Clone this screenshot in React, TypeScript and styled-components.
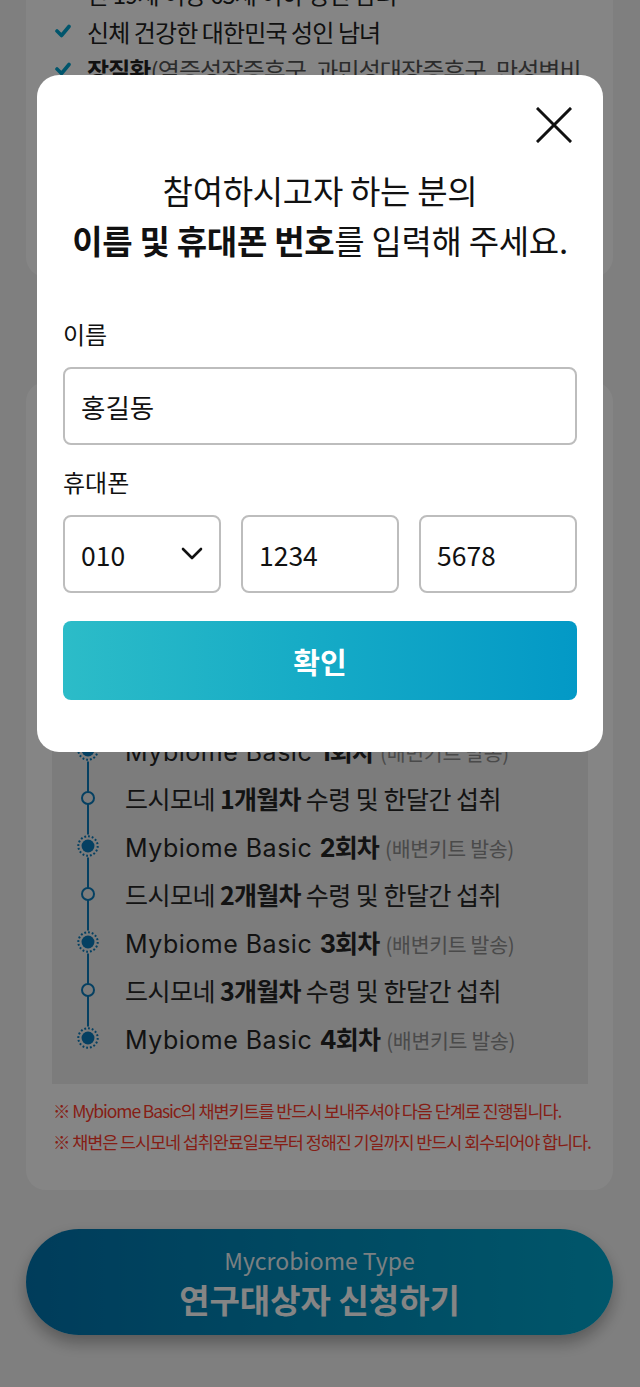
import React from 'react';
import styled, { createGlobalStyle } from 'styled-components';

const GlobalStyle = createGlobalStyle`
  html, body {
    margin: 0;
    padding: 0;
    background: #f4f4f4;
    font-family: "Noto Sans CJK KR", "Noto Sans", sans-serif;
    overflow: hidden;
  }
  * { box-sizing: border-box; }
`

const Page = styled.div`
  margin-top: -60px;
  padding: 0 27px 52px 26px;
  display: flex;
  flex-direction: column;
`

const Card = styled.section<{ $top?: number }>`
  background: #fff;
  border-radius: 20px;
  overflow: hidden;
  margin-top: ${p => p.$top ?? 0}px;
`

const CheckCard = styled(Card)`
  padding: 34px 25px 37px 29px;
`

const CheckRow = styled.div`
  display: flex;
  align-items: center;
  column-gap: 16px;
  height: 38px;
  font-size: 24px;
  color: #222;
  white-space: nowrap;
  letter-spacing: -0.9px;

  svg { flex-shrink: 0; }
  b { font-weight: 700; color: #222; }
  span { color: #555; }
`

const ScheduleCard = styled(Card)`
  padding: 24px 25px 33px 26px;
`

const ScheduleTitle = styled.h3`
  margin: 0 0 20px;
  height: 40px;
  line-height: 40px;
  font-size: 26px;
  font-weight: 700;
  color: #222;
`

const TimelineBox = styled.div`
  background: #ededed;
  padding: 20px 0 22px 24px;
`

const TimelineRow = styled.div`
  display: flex;
  align-items: center;
  column-gap: 25px;
  height: 48px;
  font-family: Inter, "Noto Sans CJK KR", sans-serif;
  font-size: 25px;
  color: #262626;
  white-space: nowrap;
  letter-spacing: 0.5px;

  b { font-weight: 700; letter-spacing: -0.8px; }
  small {
    font-family: "Noto Sans CJK KR", sans-serif;
    font-size: 20.5px;
    letter-spacing: -0.3px;
    color: #8e8e8e;
    margin-left: 6px;
  }
`

const NodeCell = styled.div<{ $first?: boolean; $last?: boolean }>`
  width: 24px;
  height: 48px;
  display: flex;
  align-items: center;
  justify-content: center;
  background: linear-gradient(#0a7cbc, #0a7cbc) no-repeat;
  background-size: 2px ${p => (p.$first || p.$last ? '50%' : '100%')};
  background-position: center ${p => (p.$first ? 'bottom' : 'top')};
`

const KoreanLine = styled.span`
  font-family: "Noto Sans CJK KR", sans-serif;
  font-size: 25px;
  letter-spacing: -0.5px;
`

const Notes = styled.div`
  margin-top: 11px;
  padding-left: 1px;
`

const Note = styled.p`
  margin: 0;
  line-height: 31px;
  font-size: 17.5px;
  letter-spacing: -1.1px;
  color: #ff3b2b;
  white-space: nowrap;
`

const ApplyButton = styled.button`
  margin-top: 39px;
  height: 106px;
  border: none;
  border-radius: 53px;
  background: linear-gradient(90deg, #0074ae 0%, #0093c0 60%, #00a6cd 100%);
  box-shadow: 0 8px 16px rgba(0, 0, 0, 0.3);
  display: flex;
  flex-direction: column;
  align-items: center;
  justify-content: center;
  row-gap: 3px;
  font-family: "Noto Sans CJK KR", sans-serif;
  color: #fff;
`

const ApplySub = styled.span`
  font-size: 23px;
  line-height: 30px;
  opacity: 0.92;
`

const ApplyMain = styled.span`
  font-size: 33px;
  line-height: 42px;
  font-weight: 700;
`

const Overlay = styled.div`
  position: fixed;
  inset: 0;
  background: rgba(0, 0, 0, 0.48);
  display: flex;
  justify-content: center;
  align-items: flex-start;
  padding-top: 75px;
`

const Modal = styled.div`
  width: 566px;
  background: #fff;
  border-radius: 22px;
  padding: 30px 26px 52px;
  display: flex;
  flex-direction: column;
`

const CloseButton = styled.button`
  align-self: flex-end;
  width: 40px;
  height: 40px;
  margin-right: 3px;
  padding: 0;
  border: none;
  background: none;
  display: flex;
  align-items: center;
  justify-content: center;
`

const Title = styled.h2`
  margin: 20px 0 0;
  text-align: center;
  font-size: 33px;
  line-height: 50px;
  font-weight: 400;
  color: #111;
  letter-spacing: -0.3px;
  white-space: nowrap;

  b { font-weight: 700; }
`

const Label = styled.label<{ $top: number }>`
  display: block;
  margin: ${p => p.$top}px 0 17px;
  font-size: 24px;
  line-height: 32px;
  color: #111;
`

const TextField = styled.div`
  height: 78px;
  border: 2px solid #bdbdbd;
  border-radius: 8px;
  display: flex;
  align-items: center;
  justify-content: space-between;
  padding: 0 16px;
  font-size: 26.5px;
  color: #111;
`

const PhoneRow = styled.div`
  display: grid;
  grid-template-columns: repeat(3, 1fr);
  column-gap: 20px;
`

const ConfirmButton = styled.button`
  margin-top: 28px;
  height: 79px;
  border: none;
  border-radius: 8px;
  background: linear-gradient(90deg, #2cbcc8 0%, #17acc6 45%, #0399c6 100%);
  color: #fff;
  font-family: "Noto Sans CJK KR", sans-serif;
  font-size: 29px;
  font-weight: 700;
`

const Check = () => (
  <svg width="16" height="14" viewBox="0 0 16 14">
    <polyline points="2,7 6.5,11.5 14,2.5" fill="none" stroke="#00a4cf" strokeWidth="3.6" strokeLinecap="round" strokeLinejoin="round" />
  </svg>
)

const KitNode = () => (
  <svg width="26" height="26" viewBox="0 0 26 26">
    <circle cx="13" cy="13" r="12.5" fill="#ededed" />
    <circle cx="13" cy="13" r="10.5" fill="none" stroke="#0a7cbc" strokeWidth="2.2" strokeDasharray="2 2.1" />
    <circle cx="13" cy="13" r="7" fill="#0a7cbc" />
  </svg>
)

const DoseNode = () => (
  <svg width="16" height="16" viewBox="0 0 16 16">
    <circle cx="8" cy="8" r="6" fill="#ededed" stroke="#0a7cbc" strokeWidth="2" />
  </svg>
)

type Step = { kind: 'kit' | 'dose'; n?: number; text?: string }

const steps: Step[] = [
  { kind: 'dose', text: '연구대상자 신청서 작성' },
  { kind: 'dose', text: '참여 동의서 작성 및 제출' },
  { kind: 'dose', text: '대상자 선정 결과 안내' },
  { kind: 'dose', text: '배변키트 및 제품 발송' },
  { kind: 'dose', text: '사전 설문 작성' },
  { kind: 'kit', n: 1 },
  { kind: 'dose', n: 1 },
  { kind: 'kit', n: 2 },
  { kind: 'dose', n: 2 },
  { kind: 'kit', n: 3 },
  { kind: 'dose', n: 3 },
  { kind: 'kit', n: 4 },
]

const checks = [
  '만 19세 이상 65세 이하 성인 남녀',
  '신체 건강한 대한민국 성인 남녀',
  null,
  '최근 3개월 이내 항생제 복용 이력이 없는 분',
  '연구 기간 동안 섭취 및 채변이 가능한 분',
  '스마트폰으로 설문 참여가 가능한 분',
  '연구 참여에 자발적으로 동의한 분',
]

export default function App() {
  return (
    <>
      <GlobalStyle />
      <Page>
        <CheckCard>
          {checks.map((c, i) => (
            <CheckRow key={i}>
              <Check />
              {c ?? (
                <span>
                  <b>장질환</b>(염증성장증후군, 과민성대장증후군, 만성변비
                </span>
              )}
            </CheckRow>
          ))}
        </CheckCard>

        <ScheduleCard $top={105}>
          <ScheduleTitle>연구 진행 일정</ScheduleTitle>
          <TimelineBox>
            {steps.map((s, i) => (
              <TimelineRow key={i}>
                <NodeCell $first={i === 0} $last={i === steps.length - 1}>
                  {s.kind === 'kit' ? <KitNode /> : <DoseNode />}
                </NodeCell>
                {s.kind === 'kit' ? (
                  <span>
                    Mybiome Basic <b>{s.n}회차</b>
                    <small>(배변키트 발송)</small>
                  </span>
                ) : s.n ? (
                  <KoreanLine>
                    드시모네 <b>{s.n}개월차</b> 수령 및 한달간 섭취
                  </KoreanLine>
                ) : (
                  <KoreanLine>{s.text}</KoreanLine>
                )}
              </TimelineRow>
            ))}
          </TimelineBox>
          <Notes>
            <Note>※ Mybiome Basic의 채변키트를 반드시 보내주셔야 다음 단계로 진행됩니다.</Note>
            <Note>※ 채변은 드시모네 섭취완료일로부터 정해진 기일까지 반드시 회수되어야 합니다.</Note>
          </Notes>
        </ScheduleCard>

        <ApplyButton>
          <ApplySub>Mycrobiome Type</ApplySub>
          <ApplyMain>연구대상자 신청하기</ApplyMain>
        </ApplyButton>
      </Page>

      <Overlay>
        <Modal>
          <CloseButton aria-label="닫기">
            <svg width="36" height="36" viewBox="0 0 36 36">
              <path d="M2 2 L34 34 M34 2 L2 34" stroke="#111" strokeWidth="3" strokeLinecap="square" />
            </svg>
          </CloseButton>
          <Title>
            참여하시고자 하는 분의
            <br />
            <b>이름 및 휴대폰 번호</b>를 입력해 주세요.
          </Title>

          <Label $top={53}>이름</Label>
          <TextField>홍길동</TextField>

          <Label $top={21}>휴대폰</Label>
          <PhoneRow>
            <TextField>
              010
              <svg width="22" height="14" viewBox="0 0 22 14">
                <polyline points="2,2 11,11 20,2" fill="none" stroke="#111" strokeWidth="2.6" strokeLinecap="round" strokeLinejoin="round" />
              </svg>
            </TextField>
            <TextField>1234</TextField>
            <TextField>5678</TextField>
          </PhoneRow>

          <ConfirmButton>확인</ConfirmButton>
        </Modal>
      </Overlay>
    </>
  )
}
